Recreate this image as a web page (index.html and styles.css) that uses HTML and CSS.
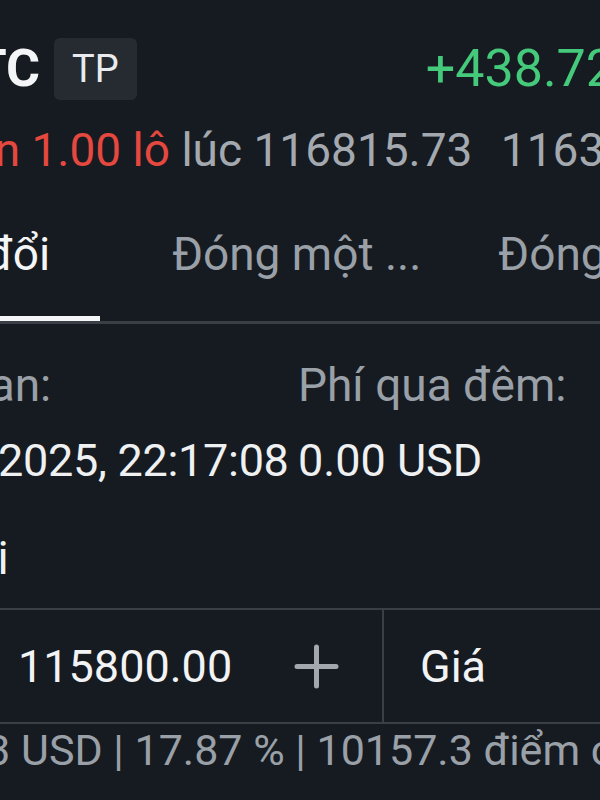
FILE: index.html
```html
<!DOCTYPE html>
<html lang="vi">
<head>
    <meta charset="UTF-8">
    <meta name="viewport" content="width=device-width, initial-scale=1.0">
    <title>BTC - Sửa đổi lệnh</title>
    <link rel="stylesheet" href="styles.css">
</head>
<body>
    <div class="screen">

        <div class="head">
            <div class="symbol">BTC</div>
            <div class="badge">TP</div>
            <div class="profit">+438.72 USD</div>
        </div>

        <div class="deal">
            <span class="side">Bán 1.00 lô</span>
            <span class="open">lúc 116815.73</span>
            <span class="current">116377.01</span>
        </div>

        <div class="tabs">
            <div class="tab tab-edit active">Sửa đổi</div>
            <div class="tab tab-part">Đóng một ...</div>
            <div class="tab tab-all">Đóng tất cả</div>
        </div>

        <div class="info">
            <div class="cell">
                <div class="label label-time">Thời gian:</div>
                <div class="value value-time">29.07.2025, 22:17:08</div>
            </div>
            <div class="cell">
                <div class="label">Phí qua đêm:</div>
                <div class="value">0.00 USD</div>
            </div>
        </div>

        <div class="field-title">Chốt lời</div>

        <div class="stepper">
            <div class="step-main">
                <button class="step-btn minus" aria-label="Giảm">
                    <svg width="47" height="47" viewBox="0 0 47 47">
                        <path d="M4 23.5H43" />
                    </svg>
                </button>
                <span class="step-value">115800.00</span>
                <button class="step-btn plus" aria-label="Tăng">
                    <svg width="47" height="47" viewBox="0 0 47 47">
                        <path d="M4 23.5H43M23.5 4V43" />
                    </svg>
                </button>
            </div>
            <div class="step-type">Giá</div>
        </div>

        <div class="hint">1015.73 USD | 17.87 % | 10157.3 điểm cách giá</div>

    </div>
</body>
</html>
```

FILE: styles.css
```css
html, body {
    margin: 0;
    padding: 0;
    width: 600px;
    height: 800px;
    overflow: hidden;
}
body {
    background-color: #161b21;
    color: #eef0f2;
    font-family: 'Roboto', 'Noto Sans', sans-serif;
    font-size: 45px;
}
.screen {
    white-space: nowrap;
}

/* header */
.head {
    display: flex;
    align-items: center;
    height: 62px;
    margin-top: 38px;
    margin-left: -58px;
}
.symbol {
    font-size: 52px;
    font-weight: 700;
    line-height: 62px;
    color: #f4f5f6;
}
.badge {
    margin-left: 14px;
    height: 62px;
    padding: 0 18px;
    border-radius: 6px;
    background-color: #262b32;
    font-size: 38px;
    line-height: 62px;
    color: #e9ebee;
}
.profit {
    margin-left: 289px;
    font-size: 52px;
    line-height: 62px;
    color: #45c97a;
}

/* deal line */
.deal {
    margin-top: 20px;
    margin-left: -59px;
    font-size: 46px;
    line-height: 60px;
}
.side {
    color: #e5483f;
}
.open {
    color: #a4a9b0;
}
.current {
    margin-left: 17px;
    color: #a4a9b0;
}

/* tabs */
.tabs {
    display: flex;
    margin-left: -107px;
    border-bottom: 3px solid #3a3f46;
    font-size: 46px;
}
.tab {
    padding: 44px 0 32px;
    line-height: 60px;
    color: #9aa0a7;
    border-bottom: 5px solid transparent;
}
.tab.active {
    color: #f4f5f6;
    border-bottom-color: #f4f5f6;
}
.tab-edit {
    padding-right: 50px;
}
.tab-part {
    margin-left: 72px;
}
.tab-all {
    margin-left: 77px;
}

/* info grid */
.info {
    display: grid;
    grid-template-columns: 423px auto;
    margin-left: -125px;
    padding-top: 33px;
}
.label {
    font-size: 46px;
    line-height: 56px;
    color: #9aa0a7;
}
.label-time {
    margin-left: -24px;
}
.value {
    margin-top: 20px;
    line-height: 56px;
    color: #eef0f2;
}
.value-time {
    letter-spacing: -0.3px;
}

.field-title {
    margin-top: 41px;
    margin-left: -148px;
    font-size: 46px;
    line-height: 56px;
}

/* price stepper */
.stepper {
    display: flex;
    margin-top: 22px;
    margin-left: -200px;
    border-top: 2px solid #3a3f46;
    border-bottom: 2px solid #3a3f46;
    height: 112px;
}
.step-main {
    display: flex;
    align-items: center;
    width: 582px;
    border-right: 2px solid #3a3f46;
}
.step-btn {
    display: flex;
    padding: 0;
    border: none;
    background: none;
}
.step-btn path {
    stroke: #a3a8ae;
    stroke-width: 5;
    stroke-linecap: round;
    fill: none;
}
.minus {
    margin-left: 40px;
}
.plus {
    margin-left: auto;
    margin-right: 42px;
}
.step-value {
    margin-left: 131px;
    color: #f2f3f5;
}
.step-type {
    display: flex;
    align-items: center;
    padding-left: 36px;
    color: #f2f3f5;
}

.hint {
    margin-left: -146px;
    font-size: 43px;
    line-height: 52px;
    color: #9aa0a7;
}
```
